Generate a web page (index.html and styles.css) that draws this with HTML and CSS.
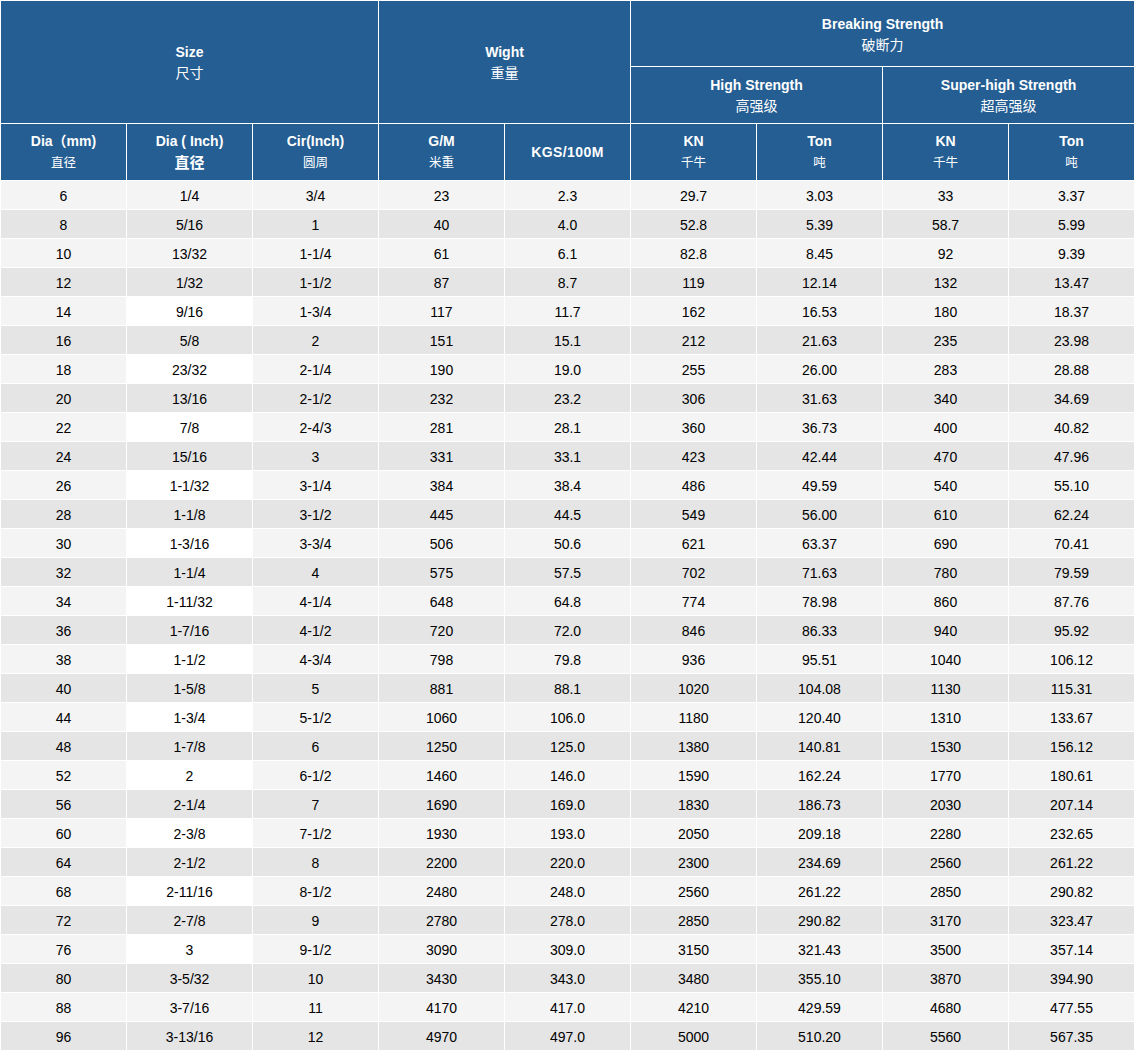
FILE: index.html
```html
<!DOCTYPE html>
<html lang="zh-CN">
<head>
<meta charset="utf-8">
<title>Breaking Strength Table</title>
<link rel="stylesheet" href="styles.css">
</head>
<body>
<table class="spec">
  <colgroup>
    <col class="c"><col class="c"><col class="c"><col class="c"><col class="c"><col class="c"><col class="c"><col class="c"><col class="c">
  </colgroup>
  <thead>
    <tr class="h1">
      <th colspan="3" rowspan="2"><span class="en">Size</span><span class="zh">尺寸</span></th>
      <th colspan="2" rowspan="2"><span class="en">Wight</span><span class="zh">重量</span></th>
      <th colspan="4"><span class="en">Breaking Strength</span><span class="zh">破断力</span></th>
    </tr>
    <tr class="h2">
      <th colspan="2"><span class="en">High Strength</span><span class="zh">高强级</span></th>
      <th colspan="2"><span class="en">Super-high Strength</span><span class="zh">超高强级</span></th>
    </tr>
    <tr class="h3">
      <th><span class="en">Dia（mm)</span><span class="zh sm">直径</span></th>
      <th><span class="en">Dia ( Inch)</span><span class="zh big">直径</span></th>
      <th><span class="en">Cir(Inch)</span><span class="zh sm">圆周</span></th>
      <th><span class="en">G/M</span><span class="zh sm">米重</span></th>
      <th><span class="en wide">KGS/100M</span></th>
      <th><span class="en">KN</span><span class="zh sm">千牛</span></th>
      <th><span class="en">Ton</span><span class="zh sm">吨</span></th>
      <th><span class="en">KN</span><span class="zh sm">千牛</span></th>
      <th><span class="en">Ton</span><span class="zh sm">吨</span></th>
    </tr>
  </thead>
  <tbody>
    <tr><td>6</td><td>1/4</td><td>3/4</td><td>23</td><td>2.3</td><td>29.7</td><td>3.03</td><td>33</td><td>3.37</td></tr>
    <tr><td>8</td><td>5/16</td><td>1</td><td>40</td><td>4.0</td><td>52.8</td><td>5.39</td><td>58.7</td><td>5.99</td></tr>
    <tr><td>10</td><td>13/32</td><td>1-1/4</td><td>61</td><td>6.1</td><td>82.8</td><td>8.45</td><td>92</td><td>9.39</td></tr>
    <tr><td>12</td><td>1/32</td><td>1-1/2</td><td>87</td><td>8.7</td><td>119</td><td>12.14</td><td>132</td><td>13.47</td></tr>
    <tr><td>14</td><td class="w">9/16</td><td>1-3/4</td><td>117</td><td>11.7</td><td>162</td><td>16.53</td><td>180</td><td>18.37</td></tr>
    <tr><td>16</td><td>5/8</td><td>2</td><td>151</td><td>15.1</td><td>212</td><td>21.63</td><td>235</td><td>23.98</td></tr>
    <tr><td>18</td><td class="w">23/32</td><td>2-1/4</td><td>190</td><td>19.0</td><td>255</td><td>26.00</td><td>283</td><td>28.88</td></tr>
    <tr><td>20</td><td>13/16</td><td>2-1/2</td><td>232</td><td>23.2</td><td>306</td><td>31.63</td><td>340</td><td>34.69</td></tr>
    <tr><td>22</td><td class="w">7/8</td><td>2-4/3</td><td>281</td><td>28.1</td><td>360</td><td>36.73</td><td>400</td><td>40.82</td></tr>
    <tr><td>24</td><td>15/16</td><td>3</td><td>331</td><td>33.1</td><td>423</td><td>42.44</td><td>470</td><td>47.96</td></tr>
    <tr><td>26</td><td class="w">1-1/32</td><td>3-1/4</td><td>384</td><td>38.4</td><td>486</td><td>49.59</td><td>540</td><td>55.10</td></tr>
    <tr><td>28</td><td>1-1/8</td><td>3-1/2</td><td>445</td><td>44.5</td><td>549</td><td>56.00</td><td>610</td><td>62.24</td></tr>
    <tr><td>30</td><td class="w">1-3/16</td><td>3-3/4</td><td>506</td><td>50.6</td><td>621</td><td>63.37</td><td>690</td><td>70.41</td></tr>
    <tr><td>32</td><td>1-1/4</td><td>4</td><td>575</td><td>57.5</td><td>702</td><td>71.63</td><td>780</td><td>79.59</td></tr>
    <tr><td>34</td><td class="w">1-11/32</td><td>4-1/4</td><td>648</td><td>64.8</td><td>774</td><td>78.98</td><td>860</td><td>87.76</td></tr>
    <tr><td>36</td><td>1-7/16</td><td>4-1/2</td><td>720</td><td>72.0</td><td>846</td><td>86.33</td><td>940</td><td>95.92</td></tr>
    <tr><td>38</td><td class="w">1-1/2</td><td>4-3/4</td><td>798</td><td>79.8</td><td>936</td><td>95.51</td><td>1040</td><td>106.12</td></tr>
    <tr><td>40</td><td>1-5/8</td><td>5</td><td>881</td><td>88.1</td><td>1020</td><td>104.08</td><td>1130</td><td>115.31</td></tr>
    <tr><td>44</td><td class="w">1-3/4</td><td>5-1/2</td><td>1060</td><td>106.0</td><td>1180</td><td>120.40</td><td>1310</td><td>133.67</td></tr>
    <tr><td>48</td><td>1-7/8</td><td>6</td><td>1250</td><td>125.0</td><td>1380</td><td>140.81</td><td>1530</td><td>156.12</td></tr>
    <tr><td>52</td><td class="w">2</td><td>6-1/2</td><td>1460</td><td>146.0</td><td>1590</td><td>162.24</td><td>1770</td><td>180.61</td></tr>
    <tr><td>56</td><td>2-1/4</td><td>7</td><td>1690</td><td>169.0</td><td>1830</td><td>186.73</td><td>2030</td><td>207.14</td></tr>
    <tr><td>60</td><td class="w">2-3/8</td><td>7-1/2</td><td>1930</td><td>193.0</td><td>2050</td><td>209.18</td><td>2280</td><td>232.65</td></tr>
    <tr><td>64</td><td>2-1/2</td><td>8</td><td>2200</td><td>220.0</td><td>2300</td><td>234.69</td><td>2560</td><td>261.22</td></tr>
    <tr><td>68</td><td class="w">2-11/16</td><td>8-1/2</td><td>2480</td><td>248.0</td><td>2560</td><td>261.22</td><td>2850</td><td>290.82</td></tr>
    <tr><td>72</td><td>2-7/8</td><td>9</td><td>2780</td><td>278.0</td><td>2850</td><td>290.82</td><td>3170</td><td>323.47</td></tr>
    <tr><td>76</td><td class="w">3</td><td>9-1/2</td><td>3090</td><td>309.0</td><td>3150</td><td>321.43</td><td>3500</td><td>357.14</td></tr>
    <tr><td>80</td><td>3-5/32</td><td>10</td><td>3430</td><td>343.0</td><td>3480</td><td>355.10</td><td>3870</td><td>394.90</td></tr>
    <tr><td>88</td><td>3-7/16</td><td>11</td><td>4170</td><td>417.0</td><td>4210</td><td>429.59</td><td>4680</td><td>477.55</td></tr>
    <tr><td>96</td><td>3-13/16</td><td>12</td><td>4970</td><td>497.0</td><td>5000</td><td>510.20</td><td>5560</td><td>567.35</td></tr>
  </tbody>
</table>
</body>
</html>
```
FILE: styles.css
```css
html, body {
  margin: 0;
  padding: 0;
  background: #ffffff;
}

.spec {
  width: 1135px;
  table-layout: fixed;
  border-collapse: separate;
  border-spacing: 1px;
  background: #ffffff;
  font-family: "Liberation Sans", Arial, "Noto Sans CJK SC", sans-serif;
  font-size: 14px;
  color: #000000;
}

.spec col.c {
  width: 125px;
}

.spec th {
  background: #245e93;
  color: #ffffff;
  padding: 0;
  text-align: center;
  vertical-align: middle;
  font-weight: normal;
}

.spec .en {
  display: block;
  font-weight: bold;
  font-size: 14px;
  line-height: 20px;
}

.spec .wide {
  letter-spacing: 0.4px;
}

.spec .zh {
  display: block;
  font-family: "Noto Sans CJK SC", sans-serif;
  font-size: 14px;
  line-height: 20px;
}

.spec .zh.sm {
  font-size: 12.5px;
  line-height: 22px;
}

.spec .zh.big {
  font-size: 15px;
  font-weight: bold;
  line-height: 22px;
}

.h1 th {
  height: 65px;
}

.h2 th {
  height: 56px;
}

.h3 th {
  height: 56px;
}

.spec td {
  height: 26px;
  padding: 2px 0 0;
  text-align: center;
  vertical-align: middle;
  line-height: 26px;
}

.spec tbody tr:nth-child(odd) td {
  background: #f4f4f4;
}

.spec tbody tr:nth-child(even) td {
  background: #e5e5e5;
}

.spec tbody tr td.w {
  background: #ffffff;
}
```
